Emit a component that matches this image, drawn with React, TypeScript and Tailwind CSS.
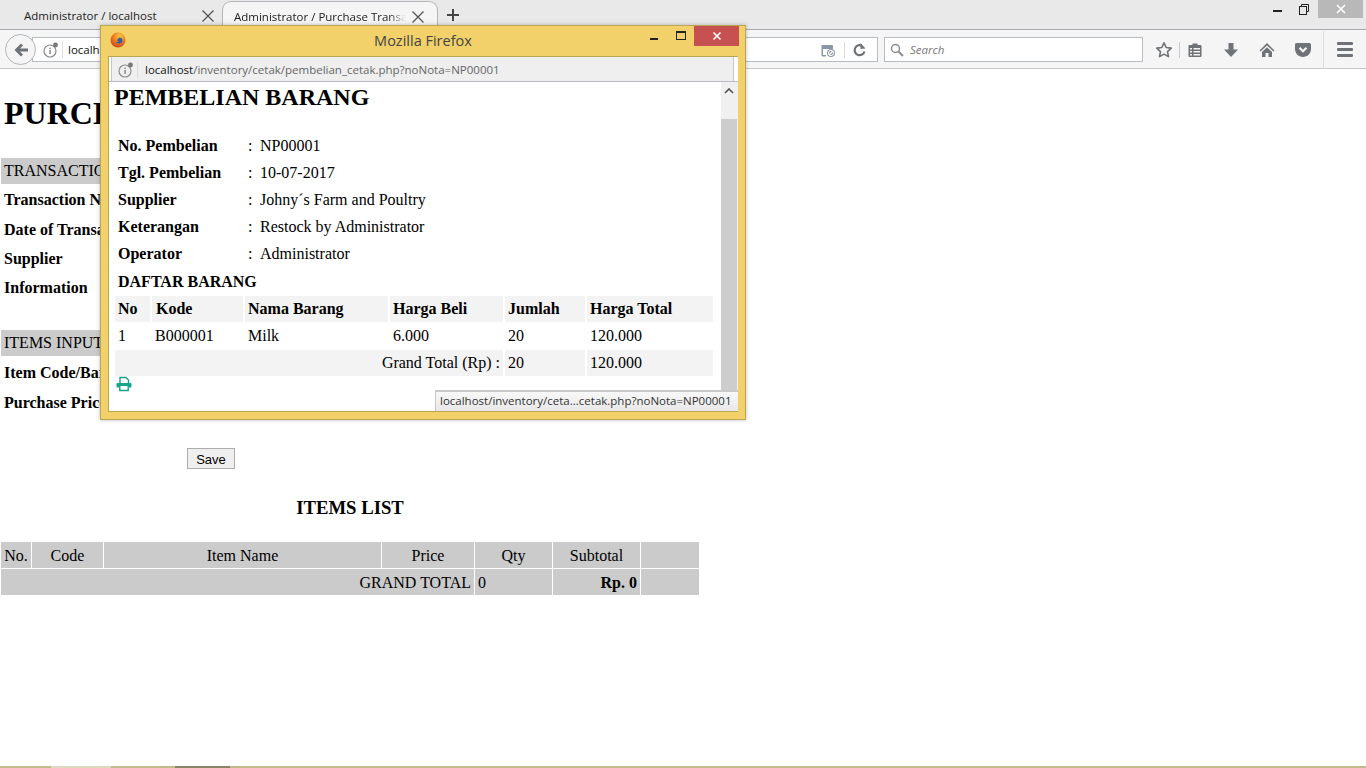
import React from "react";

const uiFont = "font-['Open_Sans',sans-serif]";

function XIcon({ className = "" }: { className?: string }) {
  return (
    <svg width="14" height="14" viewBox="0 0 14 14" className={className}>
      <path d="M1.500 1.500l11 11M12.500 1.500l-11 11" stroke="currentColor" strokeWidth="1.300" fill="none" />
    </svg>
  );
}

function InfoIcon() {
  return (
    <svg width="16" height="16" viewBox="0 0 16 16">
      <circle cx="7" cy="9" r="6" fill="none" stroke="#8c8c8c" strokeWidth="1.200" />
      <rect x="6.300" y="8" width="1.500" height="4" fill="#8c8c8c" />
      <rect x="6.300" y="5.600" width="1.500" height="1.500" fill="#8c8c8c" />
      <circle cx="12.500" cy="3" r="2.400" fill="#777" />
    </svg>
  );
}

function FirefoxLogo() {
  return (
    <svg width="16" height="16" viewBox="0 0 16 16">
      <defs>
        <radialGradient id="fx" cx="0.6" cy="0.25" r="0.85">
          <stop offset="0" stopColor="#f9c83c" />
          <stop offset="0.5" stopColor="#ec7a22" />
          <stop offset="1" stopColor="#c23a1c" />
        </radialGradient>
      </defs>
      <circle cx="8" cy="8" r="7.500" fill="url(#fx)" />
      <path d="M9 5.500c2 0 3.500 1.300 3.500 3 0 1.800-1.600 3-3.500 3-1.500 0-2.700-.7-3.300-1.800 1.200.5 2.700.2 3.200-.8-.8.200-1.700-.2-1.900-1C7.700 7.500 8.500 6.500 9 5.500z" fill="#2f5f9f" />
    </svg>
  );
}

function ToolbarIcons() {
  return (
    <div className="flex items-center h-full text-[#6f7276]">
      <svg width="18" height="18" viewBox="0 0 18 18" className="ml-[12px]">
        <path d="M9 1.800l2.200 4.700 5 .6-3.700 3.500 1 5L9 13.100l-4.500 2.500 1-5L1.800 7.100l5-.6z" fill="none" stroke="currentColor" strokeWidth="1.600" strokeLinejoin="round" />
      </svg>
      <div className="w-px h-[16px] bg-[#c8cbcf] ml-[6px]" />
      <svg width="16" height="16" viewBox="0 0 16 16" className="ml-[7px]">
        <path d="M2.500 3h3V1.500h5V3h3A1 1 0 0 1 14.500 4v10a1 1 0 0 1-1 1h-11a1 1 0 0 1-1-1V4a1 1 0 0 1 1-1z" fill="currentColor" />
        <path d="M3 6h2v1.500H3zM3 9h2v1.500H3zM3 12h2v1.500H3zM6.500 6H13v1.500H6.500zM6.500 9H13v1.500H6.500zM6.500 12H13v1.500H6.500z" fill="#f5f5f5" />
      </svg>
      <svg width="16" height="16" viewBox="0 0 16 16" className="ml-[20px]">
        <path d="M5.500 1h5v6.500H15L8 15 1 7.500h4.500z" fill="currentColor" />
      </svg>
      <svg width="16" height="16" viewBox="0 0 16 16" className="ml-[20px]">
        <path d="M8 1L0.500 8.500l1 1L8 3.500l6.500 6 1-1zM3 10l5-4.800 5 4.800v5H9.500v-4h-3v4H3z" fill="currentColor" />
      </svg>
      <svg width="16" height="16" viewBox="0 0 16 16" className="ml-[20px]">
        <path d="M1.500 1h13A1.500 1.500 0 0 1 16 2.500V7c0 4.400-3.600 8-8 8S0 11.400 0 7V2.500A1.500 1.500 0 0 1 1.500 1z" fill="currentColor" />
        <path d="M4.500 5.800L8 9.300l3.500-3.500" fill="none" stroke="#f5f5f5" strokeWidth="2.200" />
      </svg>
      <div className="w-px h-[38px] bg-[#dcdcdc] ml-[12px]" />
      <div className="flex flex-col gap-[3px] ml-[13px]">
        <div className="w-[16px] h-[3px] bg-current rounded-[1px]" />
        <div className="w-[16px] h-[3px] bg-current rounded-[1px]" />
        <div className="w-[16px] h-[3px] bg-current rounded-[1px]" />
      </div>
    </div>
  );
}

function BrowserChrome() {
  return (
    <div className={uiFont}>
      <div className="h-[30px] bg-[#e9e9e9] border-b border-[#a9a9b1] flex relative text-[11.5px] text-[#222]">
        <div className="w-[222px] flex items-center pl-[24px] pt-[3px]">
          <span className="whitespace-nowrap w-[172px] overflow-hidden">Administrator / localhost</span>
          <XIcon className="text-[#555] ml-[5px]" />
        </div>
        <div className="w-[216px] h-[30px] mt-[1px] bg-[#f5f5f5] border border-b-0 border-[#b4b4ba] rounded-t-[9px] flex items-center pl-[11px] relative z-10">
          <span className="whitespace-nowrap w-[172px] overflow-hidden [mask-image:linear-gradient(to_right,black_90%,transparent)]">Administrator / Purchase Transa</span>
          <XIcon className="text-[#555] ml-[5px]" />
        </div>
        <div className="ml-[8px] flex items-center">
          <svg width="14" height="14" viewBox="0 0 14 14"><path d="M7 1v12M1 7h12" stroke="#444" strokeWidth="2" /></svg>
        </div>
        <div className="ml-auto flex items-start h-[18px] text-[#222]">
          <div className="w-[9px] h-[2px] bg-[#222] mt-[10px] mr-[17px]" />
          <svg width="10" height="11" viewBox="0 0 10 11" className="mt-[4px] mr-[9px]">
            <rect x="0.500" y="2.500" width="7" height="8" fill="none" stroke="#222" />
            <path d="M2.500 2.500V.5h7v7h-2" fill="none" stroke="#222" />
          </svg>
          <div className="w-[45px] h-[18px] bg-[#b8b8b8] text-white flex items-center justify-center mr-[3px]">
            <svg width="10" height="10" viewBox="0 0 10 10"><path d="M1 1l8 8M9 1l-8 8" stroke="#fff" strokeWidth="1.600" /></svg>
          </div>
        </div>
      </div>
      <div className="h-[39px] pt-[1px] bg-[#f5f5f5] border-b border-[#c8c8c8] flex items-center">
        <div className="w-[31px] h-[31px] ml-[5px] rounded-full border border-[#b0b5bc] bg-[#f5f5f5] flex items-center justify-center relative z-10">
          <svg width="16" height="16" viewBox="0 0 16 16">
            <path d="M8 1.500l2 2-3 3h8v3H7l3 3-2 2L1.500 8z" fill="#6f7276" />
          </svg>
        </div>
        <div className="w-[846px] h-[25px] -ml-[4px] bg-white border border-[#b8bdc4] flex items-center text-[11.5px] text-[#111]">
          <div className="ml-[10px]"><InfoIcon /></div>
          <div className="w-px h-[16px] bg-[#dcdcdc] ml-[3px]" />
          <span className="ml-[5px]">localhost</span>
          <div className="ml-auto flex items-center">
            <svg width="16" height="16" viewBox="0 0 16 16">
              <path d="M2 3h10a1 1 0 0 1 1 1v3H3v6h3v1.500H2.500A1 1 0 0 1 1.500 13.500V4A1 1 0 0 1 2 3z" fill="#8a97a6" />
              <circle cx="11" cy="11" r="4" fill="#8a97a6" />
              <path d="M9 13l4-4" stroke="#fff" strokeWidth="1.200" />
              <circle cx="11" cy="11" r="2.600" fill="none" stroke="#fff" strokeWidth="1" />
            </svg>
            <div className="w-px h-[16px] bg-[#dcdcdc] mx-[8px]" />
            <svg width="14" height="14" viewBox="0 0 14 14" className="mr-[10px]">
              <path d="M11.500 8.500A5 5 0 1 1 8.500 2.500" fill="none" stroke="#6f7276" strokeWidth="2.200" />
              <path d="M7.500 0v6l5-.5z" fill="#6f7276" />
            </svg>
          </div>
        </div>
        <div className="w-[259px] h-[25px] ml-[6px] bg-white border border-[#b8bdc4] flex items-center text-[11.5px] text-[#777] italic">
          <svg width="14" height="14" viewBox="0 0 14 14" className="ml-[5px]">
            <circle cx="5.500" cy="5.500" r="4" fill="none" stroke="#8c8c8c" strokeWidth="1.500" />
            <path d="M8.500 8.500l4.500 4.500" stroke="#8c8c8c" strokeWidth="2" />
          </svg>
          <span className="ml-[6px]">Search</span>
        </div>
        <ToolbarIcons />
      </div>
    </div>
  );
}

const labelRows = [
  { label: "Transaction No", h: "h-[29px]" },
  { label: "Date of Transaction", h: "h-[31px]" },
  { label: "Supplier", h: "h-[28px]" },
  { label: "Information", h: "h-[29px]" },
];

function MainPage() {
  return (
    <div className="font-['Liberation_Serif',serif] text-[16px] text-black">
      <h1 className="text-[32px] leading-[37px] font-bold mt-[26px] ml-[4px]">PURCHASE</h1>
      <div className="h-[26px] w-[698px] ml-[1px] mt-[26px] bg-[#cbcbcb] flex items-center pl-[3px]">TRANSACTION</div>
      <div className="mt-[1px] ml-[4px] font-bold">
        {labelRows.map((r) => (
          <div key={r.label} className={`${r.h} flex items-center`}>{r.label}</div>
        ))}
      </div>
      <div className="h-[26px] w-[698px] ml-[1px] mt-[28px] bg-[#cbcbcb] flex items-center pl-[3px]">ITEMS INPUT</div>
      <div className="ml-[4px] font-bold mt-[2px]">
        <div className="h-[30px] flex items-center">Item Code/Barcode</div>
        <div className="h-[30px] flex items-center">Purchase Price</div>
      </div>
      <button className="block ml-[187px] mt-[30px] w-[48px] h-[21px] pt-[1px] bg-[#efefef] border border-[#adadad] text-[13px] leading-none font-['Liberation_Sans',sans-serif]">
        Save
      </button>
      <div className="w-[698px] ml-[1px] mt-[28px] text-center font-bold text-[18.72px] leading-[22px]">ITEMS LIST</div>
      <table className="mt-[22px] w-[700px] table-fixed border-separate border-spacing-[1px]">
        <thead>
          <tr className="bg-[#cbcbcb] h-[26px] text-center">
            <td className="w-[30px] pt-[1px]">No.</td>
            <td className="w-[71px] pt-[1px]">Code</td>
            <td className="w-[277px] pt-[1px]">Item Name</td>
            <td className="w-[92px] pt-[1px]">Price</td>
            <td className="w-[77px] pt-[1px]">Qty</td>
            <td className="w-[87px] pt-[1px]">Subtotal</td>
            <td />
          </tr>
        </thead>
        <tbody>
          <tr className="bg-[#cbcbcb] h-[26px]">
            <td colSpan={4} className="text-right pr-[3px] pt-[1px]">GRAND TOTAL</td>
            <td className="pl-[3px] pt-[1px]">0</td>
            <td className="text-right pr-[3px] pt-[1px] font-bold">Rp. 0</td>
            <td />
          </tr>
        </tbody>
      </table>
    </div>
  );
}

const infoRows = [
  ["No. Pembelian", "NP00001"],
  ["Tgl. Pembelian", "10-07-2017"],
  ["Supplier", "Johny´s Farm and Poultry"],
  ["Keterangan", "Restock by Administrator"],
  ["Operator", "Administrator"],
];

function PopupWindow() {
  return (
    <div className="absolute left-[100px] top-[25px] w-[646px] h-[395px] bg-[#f2d16b] border border-[#b9a552] shadow-[0_0_4px_rgba(0,0,0,0.25)] z-20">
      <div className={`h-[30px] pb-[1px] relative flex items-center justify-center text-[14.5px] text-[#444] ${uiFont}`}>
        <div className="absolute left-[9px] top-[6px]"><FirefoxLogo /></div>
        <span>Mozilla Firefox</span>
        <div className="absolute left-[549px] top-[12px] w-[8px] h-[2px] bg-[#222]" />
        <div className="absolute left-[575px] top-[5px] w-[10px] h-[9px] border border-t-2 border-[#222]" />
        <div className="absolute left-[593px] top-0 w-[45px] h-[20px] bg-[#c75050] flex items-center justify-center">
          <svg width="10" height="10" viewBox="0 0 10 10"><path d="M1.500 1.500l7 7M8.500 1.500l-7 7" stroke="#fff" strokeWidth="1.600" /></svg>
        </div>
      </div>
      <div className="ml-[7px] w-[630px] h-[356px] border-l border-t border-b border-[#b9a552] bg-white relative overflow-hidden">
        <div className="h-[25px] border-b border-[#b8bcc2] flex">
          <div className={`w-[623px] ml-[2px] h-[24px] pt-[1px] bg-[#efefef] border-x border-[#c4c8cc] flex items-center text-[11.5px] text-[#666] ${uiFont}`}>
            <div className="ml-[6px]"><InfoIcon /></div>
            <div className="w-px h-[16px] bg-[#dcdcdc] ml-[3px]" />
            <span className="ml-[7px] text-[#111]">localhost</span>
            <span>/inventory/cetak/pembelian_cetak.php?noNota=NP00001</span>
          </div>
        </div>
        <div className="flex h-[329px]">
          <div className="w-[612px] font-['Liberation_Serif',serif] text-[16px] text-black">
            <h2 className="text-[24px] leading-[28px] font-bold ml-[5px] mt-[1px]">PEMBELIAN BARANG</h2>
            <div className="mt-[21px] ml-[9px]">
              {infoRows.map(([label, value]) => (
                <div key={label} className="h-[27px] flex items-center">
                  <span className="w-[130px] font-bold">{label}</span>
                  <span className="w-[12px]">:</span>
                  <span>{value}</span>
                </div>
              ))}
              <div className="h-[28px] pt-[1px] flex items-center font-bold">DAFTAR BARANG</div>
            </div>
            <table className="ml-[4px] w-[602px] table-fixed border-separate border-spacing-x-[2px] border-spacing-y-[1px]">
              <tbody>
                <tr className="h-[26px] bg-[#f3f3f3] font-bold">
                  <td className="w-[35px] pl-[3px]">No</td>
                  <td className="w-[91px] pl-[4px]">Kode</td>
                  <td className="w-[143px] pl-[3px]">Nama Barang</td>
                  <td className="w-[113px] pl-[3px]">Harga Beli</td>
                  <td className="w-[80px] pl-[3px]">Jumlah</td>
                  <td className="pl-[3px]">Harga Total</td>
                </tr>
                <tr className="h-[26px]">
                  <td className="pl-[3px]">1</td>
                  <td className="pl-[3px]">B000001</td>
                  <td className="pl-[3px]">Milk</td>
                  <td className="pl-[3px]">6.000</td>
                  <td className="pl-[3px]">20</td>
                  <td className="pl-[3px]">120.000</td>
                </tr>
                <tr className="h-[26px] bg-[#f3f3f3]">
                  <td colSpan={4} className="text-right pr-[3px]">Grand Total (Rp) :</td>
                  <td className="pl-[3px]">20</td>
                  <td className="pl-[3px]">120.000</td>
                </tr>
              </tbody>
            </table>
            <svg width="16" height="16" viewBox="0 0 16 16" className="ml-[7px] -mt-[1px]">
              <path d="M4 7V1.500h6l2.500 2.500v3" fill="none" stroke="#17a589" strokeWidth="1.400" />
              <rect x="0.500" y="7" width="15" height="4.500" rx="1" fill="#17a589" />
              <path d="M3.800 10v4.500h8.400V10" fill="#fff" stroke="#17a589" strokeWidth="1.400" />
            </svg>
          </div>
          <div className="w-[17px] bg-[#f0f0f0] relative">
            <svg width="10" height="6" viewBox="0 0 10 6" className="absolute left-[3px] top-[6px]">
              <path d="M1 5l4-4 4 4" fill="none" stroke="#505050" strokeWidth="1.600" />
            </svg>
            <div className="absolute top-[37px] left-0 right-[1px] bottom-0 bg-[#cdcdcd]" />
          </div>
        </div>
        <div className={`absolute right-0 bottom-0 w-[303px] h-[21px] pb-[2px] bg-gradient-to-b from-[#f8f8f8] to-[#e8e8e8] border-t-2 border-l border-[#c9c9c9] flex items-center pl-[4px] text-[11.5px] text-[#333] whitespace-nowrap ${uiFont}`}>
          localhost/inventory/ceta...cetak.php?noNota=NP00001
        </div>
      </div>
    </div>
  );
}

export default function App() {
  return (
    <div className="relative h-[768px] w-[1366px] overflow-hidden bg-white flex flex-col">
      <BrowserChrome />
      <div className="flex-1 overflow-hidden">
        <MainPage />
      </div>
      <div className="h-[2px] bg-[#c4b98a] flex">
        <div className="ml-[51px] w-[60px] h-[2px] bg-[#ddd8c0]" />
        <div className="ml-[64px] w-[55px] h-[2px] bg-[#8b8468]" />
      </div>
      <PopupWindow />
    </div>
  );
}
